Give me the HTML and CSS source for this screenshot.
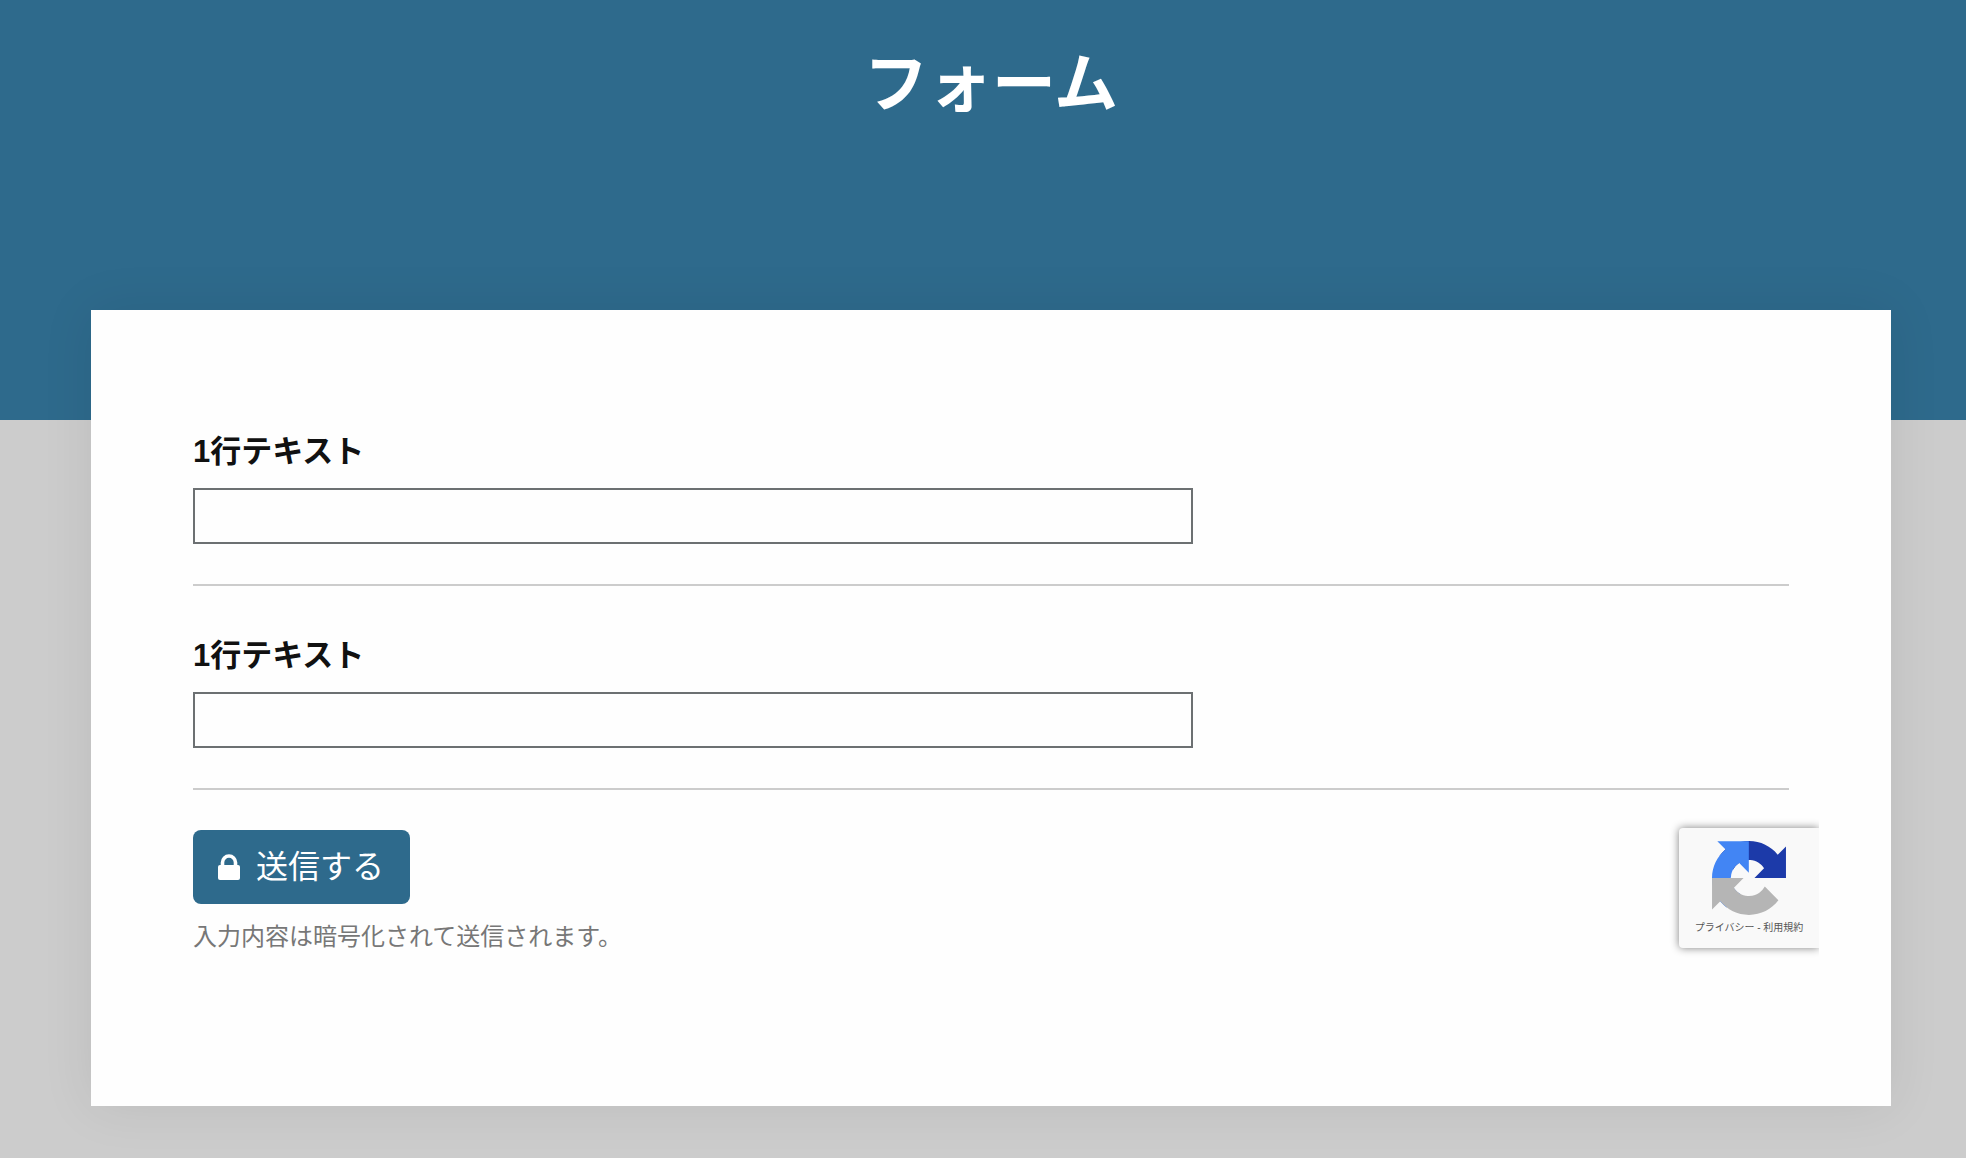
FILE: index.html
```html
<!DOCTYPE html>
<html lang="ja">

<head>
    <meta charset="UTF-8">
    <meta name="viewport" content="width=device-width, initial-scale=1.0">
    <link rel="stylesheet" href="styles.css">
    <title>フォーム</title>
</head>

<body>
    <header class="header">
        <h1 class="title">フォーム</h1>
    </header>
    <main class="container">
        <form class="form">
            <div class="form-row">
                <label for="text1">1行テキスト</label>
                <input type="text" id="text1" name="text1">
            </div>
            <div class="form-row">
                <label for="text2">1行テキスト</label>
                <input type="text" id="text2" name="text2">
            </div>
            <button type="submit" class="submit">
                <svg class="lock" viewBox="0 0 22 26" aria-hidden="true">
                    <path d="M4.500 12V8.500a6.500 6.500 0 0 1 13 0V12" fill="none" stroke="currentColor" stroke-width="3.600" />
                    <rect x="0" y="11" width="22" height="15" rx="2" fill="currentColor" />
                </svg>
                送信する
            </button>
            <p class="note">入力内容は暗号化されて送信されます。</p>
        </form>

        <!-- reCAPTCHA badge -->
        <div class="badge">
            <svg class="badge-logo" viewBox="0 0 64 64" aria-hidden="true">
                <path fill="#1c3aa9" d="M64 31.955l-.033-1.37V4.687l-7.16 7.16C50.948 4.674 42.033.093 32.05.093c-10.4 0-19.622 4.96-25.458 12.64l11.736 11.86a15.55 15.55 0 0 1 4.754-5.334c2.05-1.6 4.952-2.906 8.968-2.906.485 0 .86.057 1.135.163 4.976.393 9.288 3.14 11.828 7.124l-8.307 8.307L64 31.953" />
                <path fill="#4285f4" d="M31.862.094l-1.37.033H4.594l7.16 7.16C4.58 13.147 0 22.06 0 32.046c0 10.4 4.96 19.622 12.64 25.458L24.5 45.768a15.55 15.55 0 0 1-5.334-4.754c-1.6-2.05-2.906-4.952-2.906-8.968 0-.485.057-.86.163-1.135.393-4.976 3.14-9.288 7.124-11.828l8.307 8.307L31.86.095" />
                <path fill="#b5b5b5" d="M.001 32.045l.033 1.37v25.898l7.16-7.16c5.86 7.173 14.774 11.754 24.76 11.754 10.4 0 19.622-4.96 25.458-12.64l-11.736-11.86a15.55 15.55 0 0 1-4.754 5.334c-2.05 1.6-4.952 2.906-8.968 2.906-.485 0-.86-.057-1.135-.163-4.976-.393-9.288-3.14-11.828-7.124l8.307-8.307c-10.522.04-22.4.066-27.295-.005" />
            </svg>
            <div class="badge-links">
                <a href="#privacy">プライバシー</a> - <a href="#terms">利用規約</a>
            </div>
        </div>
    </main>
</body>

</html>
```
FILE: styles.css
```css
* {
    box-sizing: border-box;
}

body {
    margin: 0;
    background-color: #cccccc;
    color: #111;
    font-family: "Liberation Sans", "Noto Sans CJK JP", sans-serif;
}

.header {
    height: 420px;
    padding: 36px 75px 0 91px;
    background-color: #2e6a8c;
}

.title {
    margin: 0;
    color: #fff;
    font-size: 64px;
    line-height: 96px;
    text-align: center;
}

/* ヘッダーに重ねるカード */
.container {
    position: relative;
    margin: -110px 75px 52px 91px;
    padding: 102px;
    background-color: #fefefe;
    box-shadow: 0 0 50px rgba(0, 0, 0, 0.08);
}

.form-row {
    margin-bottom: 40px;
    padding-bottom: 40px;
    border-bottom: 2px solid #cccccc;
}

.form-row label {
    display: block;
    margin-bottom: 10px;
    padding-top: 14px;
    font-size: 31px;
    font-weight: bold;
    line-height: 52px;
}

.form-row + .form-row label {
    padding-top: 4px;
}

.form-row input {
    display: block;
    width: 1000px;
    max-width: 100%;
    height: 56px;
    padding: 0 12px;
    border: 2px solid #6c7072;
    border-radius: 0;
    background-color: #fefefe;
    font: inherit;
    font-size: 28px;
}

.submit {
    display: flex;
    align-items: center;
    gap: 16px;
    height: 74px;
    padding: 0 26px 0 25px;
    border: none;
    border-radius: 8px;
    background-color: #2e6a8c;
    color: #fff;
    font-family: inherit;
    font-size: 32px;
    line-height: 48px;
    cursor: pointer;
}

.lock {
    width: 22px;
    height: 26px;
}

.note {
    margin: 14px 0 48px;
    color: #777;
    font-size: 24px;
    line-height: 38px;
}

.badge {
    position: absolute;
    right: 72px;
    bottom: 158px;
    width: 140px;
    height: 120px;
    padding-top: 13px;
    border-radius: 4px 0 0 4px;
    background-color: #f9f9f9;
    box-shadow: 0 0 8px #808080;
    clip-path: inset(-12px 0 -12px -12px);
    text-align: center;
}

.badge-logo {
    display: block;
    width: 74px;
    height: 74px;
    margin: 0 auto;
}

.badge-links {
    color: #555;
    font-size: 10px;
    line-height: 26px;
    white-space: nowrap;
}

.badge-links a {
    color: inherit;
    text-decoration: none;
}
```
